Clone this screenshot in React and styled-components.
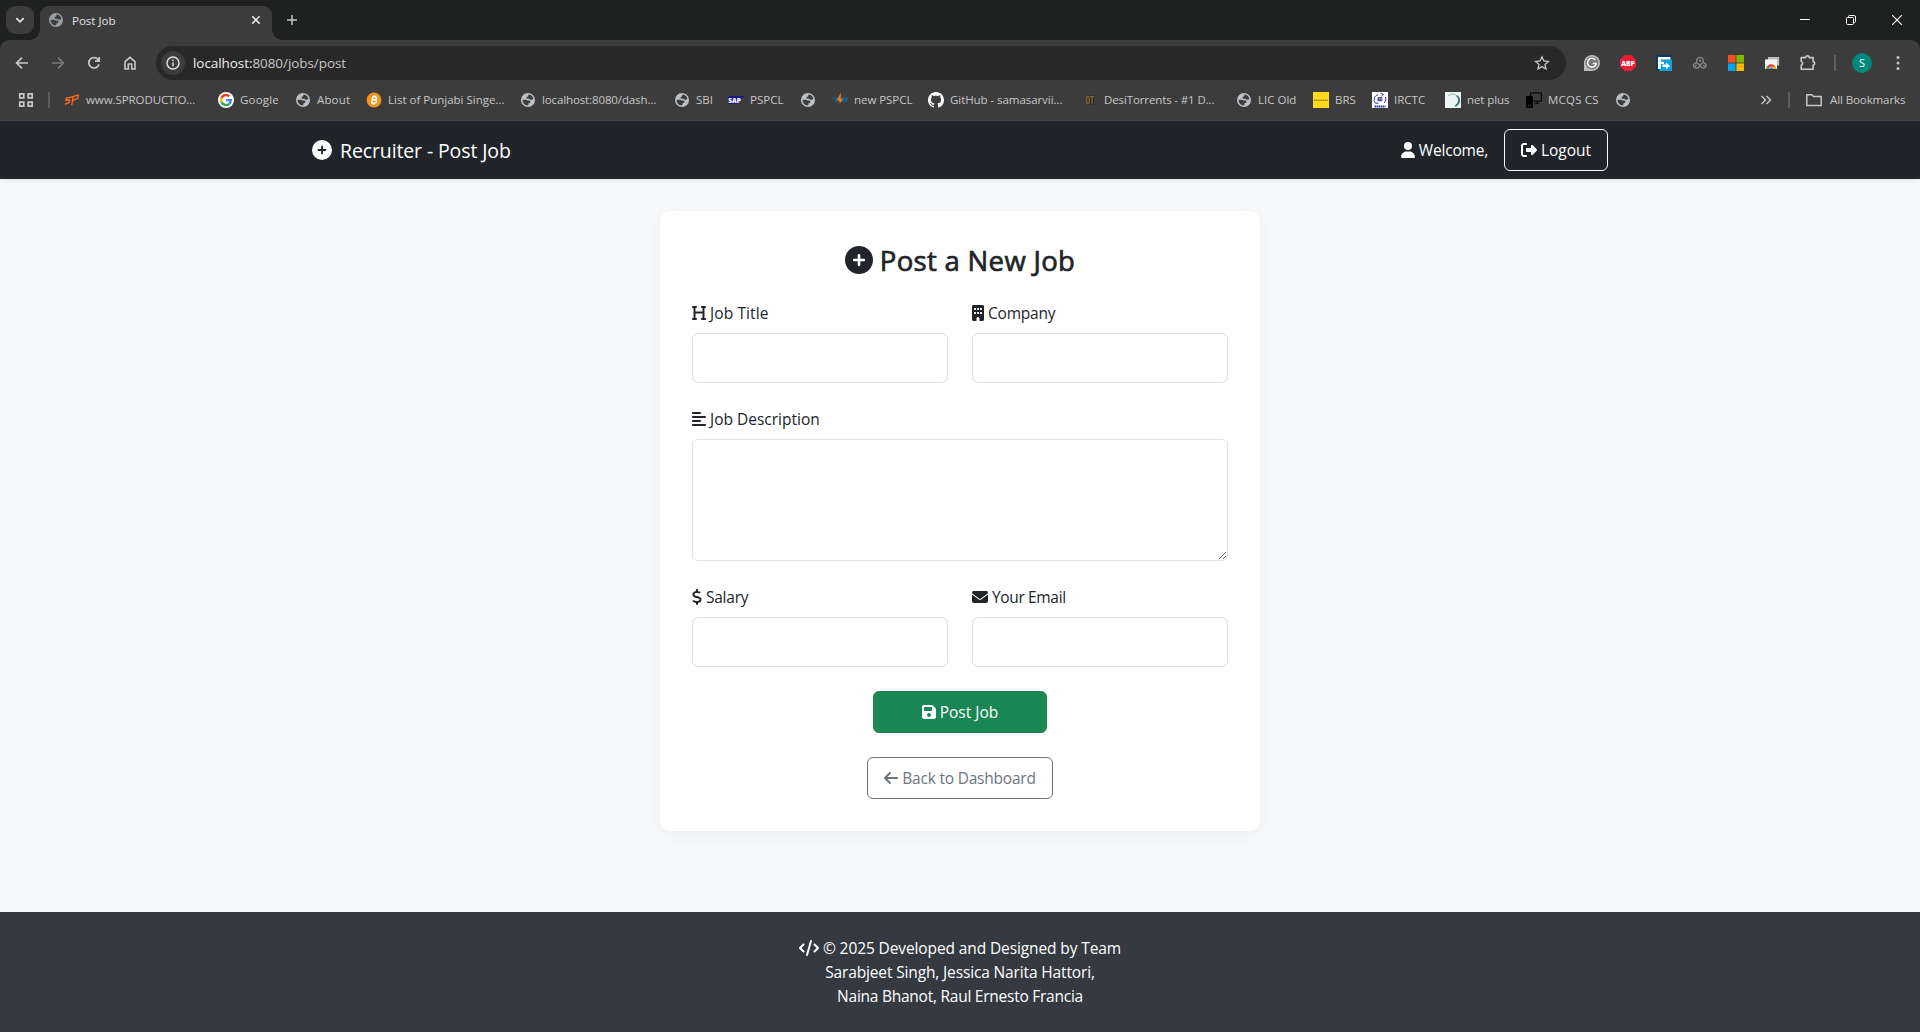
import React from 'react';
import styled, { createGlobalStyle, css } from 'styled-components';
import {
  FaCirclePlus, FaUser, FaRightFromBracket, FaHeading, FaBuilding, FaAlignLeft,
  FaDollarSign, FaEnvelope, FaFloppyDisk, FaArrowLeft, FaCode,
} from 'react-icons/fa6';

const GlobalStyle = createGlobalStyle`
  *, *::before, *::after { box-sizing: border-box; }
  body {
    margin: 0;
    font-family: "Segoe UI", "Open Sans", "Noto Sans", sans-serif;
    font-size: 16px;
    line-height: 24px;
    color: #212529;
    background: #f8f9fb;
    overflow: hidden;
  }
`;

const Window = styled.div`
  display: flex;
  flex-direction: column;
  width: 1920px;
  height: 1032px;
`;

const Label = styled.span`
  margin-top: ${(p) => p.$drop || 0}px;
  font-size: ${(p) => p.$size || 15.5}px;
  letter-spacing: ${(p) => p.$track || 0}px;
  font-weight: 400;
  -webkit-text-stroke: ${(p) => p.$stroke || 0}px currentColor;
  white-space: nowrap;
`;

/* ---------- browser chrome ---------- */

const TabStrip = styled.div`
  display: flex;
  align-items: flex-end;
  height: 40px;
  padding-left: 6px;
  background: #1f2120;
  color: #e3e3e3;
`;

const TabSearch = styled.div`
  display: grid;
  place-items: center;
  width: 28px;
  height: 28px;
  margin: 0 6px 6px 0;
  border-radius: 9px;
  background: #3c3c3c;
`;

const Tab = styled.div`
  position: relative;
  display: flex;
  align-items: center;
  width: 232px;
  height: 34px;
  padding: 0 8px 6px;
  border-radius: 9px 9px 0 0;
  background: #3c3c3c;
  color: #e3e3e3;
  &::before, &::after {
    content: '';
    position: absolute;
    bottom: 0;
    width: 10px;
    height: 10px;
  }
  &::before { left: -10px; background: radial-gradient(circle at 0 0, transparent 9.5px, #3c3c3c 10px); }
  &::after { right: -10px; background: radial-gradient(circle at 100% 0, transparent 9.5px, #3c3c3c 10px); }
`;

const TabTitle = styled.div`
  flex: 1;
  margin-left: 8px;
  line-height: 20px;
`;

const IconSlot = styled.div`
  display: grid;
  place-items: center;
  place-content: center;
  flex: none;
  width: ${(p) => p.$w || 36}px;
  height: ${(p) => p.$h || 28}px;
  color: ${(p) => p.$color || '#c7c7c7'};
`;

const Spacer = styled.div`
  flex: 1;
`;

const ToolbarBack = styled.div`
  background: #1f2120;
`;

const Toolbar = styled.div`
  height: 81px;
  border-radius: 9px 9px 0 0;
  background: #3c3c3c;
  border-bottom: 1px solid #474b49;
`;

const AddressRow = styled.div`
  display: flex;
  align-items: center;
  height: 46px;
  padding: 0 4px;
`;

const Omnibox = styled.div`
  display: flex;
  align-items: center;
  width: 1410px;
  height: 34px;
  margin: 0 8px;
  padding: 0 6px 0 5px;
  border-radius: 17px;
  background: #282828;
  color: #c7c7c7;
`;

const SiteInfo = styled.div`
  display: grid;
  place-items: center;
  width: 24px;
  height: 24px;
  margin-right: 8px;
  border-radius: 50%;
  background: #3c3c3c;
`;

const Host = styled.span`
  color: #eeeeee;
`;

const Divider = styled.div`
  width: 2px;
  height: 16px;
  background: #5e5e5e;
`;

const Avatar = styled.div`
  display: grid;
  place-items: center;
  width: 20px;
  height: 20px;
  border-radius: 50%;
  background: #00897b;
  color: #fff;
  font-size: 11px;
  line-height: 20px;
`;

const BookmarkRow = styled.div`
  display: flex;
  align-items: center;
  height: 28px;
  padding-left: 8px;
  color: #c7c7c7;
  line-height: 20px;
`;

const Bookmarks = styled.div`
  display: flex;
  flex: 1;
  padding-left: 10px;
`;

const Bookmark = styled.div`
  display: flex;
  align-items: center;
  gap: ${(p) => p.$gap || 6}px;
  width: ${(p) => p.$w}px;
  flex: none;
  svg { flex: none; }
`;

const IconBox = ({ size = 16, children, box = 16 }) => (
  <svg width={size} height={size} viewBox={`0 0 ${box} ${box}`} fill="none">{children}</svg>
);

const Globe = ({ color = '#bdc1c6' }) => (
  <IconBox>
    <circle cx="8" cy="8" r="7" fill={color} />
    <path d="M8.3 2.6c2.3 0 4.3 1.6 5 3.8-.3.9-1.2 1.5-2.4 1.4-.7 0-1-.5-1.1-1.1H7.6c-.7 0-1.1-.4-1.1-1s.5-.9 1-1c.7-.1.8-.6.8-1.1zM2.6 7.7h3.2c.8 0 1.2.3 1.5.9h1.9c.8 0 1.2.5 1.2 1.2 0 .8-.5 1.2-1.2 1.3-.6.1-.8.5-.8 1.1 0 .5-.3.9-.8 1.2-2.8-.2-5-2.5-5-5.7z" fill="#3c3c3c" />
  </IconBox>
);

const SpLogo = () => (
  <IconBox>
    <path d="M6.5 5.2 2.400 6.300 1.600 8.200 5.800 8 5.200 10.300 1.400 12M7.800 12.800 9.200 5M7.400 5.200 14.200 3 13.900 6.200 8.600 8.600" stroke="#f26a1b" strokeWidth="1.400" strokeLinejoin="round" strokeLinecap="round" />
  </IconBox>
);

const GoogleLogo = () => (
  <svg width="16" height="16" viewBox="-7 -7 62 62">
    <circle cx="24" cy="24" r="31" fill="#fff" />
    <path fill="#EA4335" d="M24 9.5c3.54 0 6.71 1.22 9.21 3.6l6.85-6.85C35.9 2.38 30.47 0 24 0 14.62 0 6.51 5.38 2.56 13.22l7.98 6.19C12.43 13.72 17.74 9.5 24 9.5z" />
    <path fill="#4285F4" d="M46.98 24.55c0-1.57-.15-3.09-.38-4.55H24v9.02h12.94c-.58 2.96-2.26 5.48-4.78 7.18l7.73 6c4.51-4.18 7.09-10.36 7.09-17.65z" />
    <path fill="#FBBC05" d="M10.53 28.59c-.48-1.45-.76-2.99-.76-4.59s.27-3.14.76-4.59l-7.98-6.19C.92 16.46 0 20.12 0 24c0 3.88.92 7.54 2.56 10.78l7.97-6.19z" />
    <path fill="#34A853" d="M24 48c6.48 0 11.93-2.13 15.89-5.81l-7.73-6c-2.15 1.45-4.92 2.3-8.16 2.3-6.26 0-11.57-4.22-13.47-9.91l-7.98 6.19C6.51 42.62 14.62 48 24 48z" />
  </svg>
);

const BitcoinLogo = () => (
  <IconBox>
    <circle cx="8" cy="8" r="7.4" fill="#f7931a" />
    <path d="M6.8 4.9 5.800 11.100M6 4.900h3c2.600.3 2.100 2.900-.4 2.900H6.200h2.600c2.700.3 2.200 3.300-.5 3.300H5M7.900 3.400l-.2 1.400M7.100 11.400l-.2 1.300M9.300 3.600l-.2 1.200M8.500 11.400l-.2 1.300" stroke="#fff" strokeWidth="1.400" />
  </IconBox>
);

const SapLogo = () => (
  <IconBox>
    <path d="M0 4h16l-6.5 8H0z" fill="#1a1a8c" />
    <text x="0.2" y="10.8" fontSize="7.5" fontWeight="800" fontFamily="Open Sans, sans-serif" fill="#fff" textLength="12.6" lengthAdjust="spacingAndGlyphs">SAP</text>
  </IconBox>
);

const BoltLogo = () => (
  <IconBox>
    <path d="M0 5.2h6l-1.200 5H3L2.500 7 0 6.200zM8.500 5.200H15.500c1 1.600.6 4-1 4.600l-6.500.6 2-2.600z" fill="#14607f" />
    <path d="M9 .5 4.600 8.400h2.800L6.400 13.500l4.800-6.700H8.600z" fill="#f07a26" />
    <path d="M6.800 10.500h1.200L6.400 16z" fill="#20303a" />
  </IconBox>
);

const GithubLogo = () => (
  <IconBox>
    <path fill="#fff" d="M8 0C3.58 0 0 3.58 0 8c0 3.54 2.29 6.53 5.47 7.59.4.07.55-.17.55-.38 0-.19-.01-.82-.01-1.49-2.01.37-2.53-.49-2.69-.94-.09-.23-.48-.94-.82-1.13-.28-.15-.68-.52-.01-.53.63-.01 1.08.58 1.23.82.72 1.21 1.87.87 2.33.66.07-.52.28-.87.51-1.07-1.78-.2-3.64-.89-3.64-3.95 0-.87.31-1.59.82-2.15-.08-.2-.36-1.02.08-2.12 0 0 .67-.21 2.2.82.64-.18 1.32-.27 2-.27s1.36.09 2 .27c1.53-1.04 2.2-.82 2.2-.82.44 1.1.16 1.92.08 2.12.51.56.82 1.27.82 2.15 0 3.07-1.87 3.75-3.65 3.95.29.25.54.73.54 1.48 0 1.07-.01 1.93-.01 2.2 0 .21.15.46.55.38A8.01 8.01 0 0 0 16 8c0-4.42-3.58-8-8-8z" />
  </IconBox>
);

const DtLogo = () => (
  <IconBox>
    <path d="M4 3.500h8v9H4z" fill="#2c2720" />
    <path d="M4.800 4.500v7M4.800 4.600h1.400q1 0 1 1v4.600q0 1-1 1H4.800M8.100 4.700h3.800M10 4.700v7" stroke="#8a6a3c" strokeWidth="1.200" />
  </IconBox>
);

const BrsLogo = () => (
  <IconBox>
    <path d="M0 0h16v16H0z" fill="#ffd91a" />
    <path d="M1 8.200h14" stroke="#6f6320" strokeWidth="1" strokeDasharray="1.4 .4" />
  </IconBox>
);

const IrctcLogo = () => (
  <IconBox>
    <path d="M0 0h16v16H0z" fill="#fff" />
    <path d="M2.400 8.500A5.500 5.500 0 0 1 6 2.600M8.600 1.200l3 1.200-2.200 1.600M13.400 5a5.500 5.500 0 0 1-1 6M1.500 8.500l2 2.700h3" stroke="#2b35a5" strokeWidth="1" />
    <path d="M5.600 5.200h4.600v4H5.600z" fill="#2b2f9b" />
    <path d="M6.600 6.400h1.400M6.600 8h1.400M9.200 6v2.400" stroke="#fff" strokeWidth=".6" />
    <path d="M2.500 14.600h11" stroke="#2b35a5" strokeWidth="2" strokeDasharray="1.600 .5" />
  </IconBox>
);

const NetLogo = () => (
  <IconBox>
    <path d="M0 0h16v16H0z" fill="#eef4f6" />
    <path d="M3 4.200A6 6 0 0 1 12 4" stroke="#9db4b0" strokeWidth="1" />
    <path d="M12 3.600c3.600 3.600 2.400 8.600-2 10.400" stroke="#2f7f6d" strokeWidth="1.600" />
    <path d="M14.300 6.500c.4 3-1 5.600-3.400 7" stroke="#3f4f8c" strokeWidth=".8" />
  </IconBox>
);

const DevicesLogo = () => (
  <IconBox>
    <path d="M4.600 4.500V.9h10.800v8.300H7" stroke="#0b0b0b" strokeWidth="1.300" />
    <path d="M10.400 9.200h1.600v2.200h-1.600zM8.600 11h5v.9h-5z" fill="#0b0b0b" />
    <rect x="0" y="4" width="7" height="12" rx="1" fill="#000" />
    <path d="M2 13.600h1M4.200 13.600h1" stroke="#555" strokeWidth=".8" />
  </IconBox>
);

const BOOKMARKS = [
  { icon: <SpLogo />, text: 'www.SPRODUCTIO...', w: 154, track: -0.08 },
  { icon: <GoogleLogo />, text: 'Google', w: 77, track: 0.2 },
  { icon: <Globe />, text: 'About', w: 71, track: 0.15 },
  { icon: <BitcoinLogo />, text: 'List of Punjabi Singe...', w: 154 },
  { icon: <Globe />, text: 'localhost:8080/dash...', w: 154, track: -0.12 },
  { icon: <Globe />, text: 'SBI', w: 54 },
  { icon: <SapLogo />, text: 'PSPCL', w: 72 },
  { icon: <Globe />, text: '', w: 32 },
  { icon: <BoltLogo />, text: 'new PSPCL', w: 96, track: -0.05 },
  { icon: <GithubLogo />, text: 'GitHub - samasarvii...', w: 154, track: -0.06 },
  { icon: <DtLogo />, text: 'DesiTorrents - #1 D...', w: 154, track: -0.12 },
  { icon: <Globe />, text: 'LIC Old', w: 77 },
  { icon: <BrsLogo />, text: 'BRS', w: 59 },
  { icon: <IrctcLogo />, text: 'IRCTC', w: 73 },
  { icon: <NetLogo />, text: 'net plus', w: 81, track: -0.08 },
  { icon: <DevicesLogo />, text: 'MCQS CS', w: 89, track: 0.2 },
  { icon: <Globe />, text: '', w: 32 },
];

const Stroke = ({ d, size = 16, width = 1.7 }) => (
  <IconBox size={size}><path d={d} stroke="currentColor" strokeWidth={width} /></IconBox>
);

const Extensions = () => (
  <>
    <IconSlot>
      <IconBox>
        <path d="M8 0a8 8 0 0 1 0 16H0V8a8 8 0 0 1 8-8z" fill="#bdbdbd" />
        <circle cx="8" cy="8" r="6.500" fill="#777" />
        <path d="M11.400 5A4.400 4.400 0 1 0 12.300 8.600H8.800" stroke="#fff" strokeWidth="1.500" />
      </IconBox>
    </IconSlot>
    <IconSlot>
      <IconBox>
        <path d="M4.700 0h6.600L16 4.700v6.600L11.300 16H4.700L0 11.300V4.700z" fill="#ee1c3b" />
        <text x="1.200" y="10.700" fontSize="7.500" fontWeight="800" fontFamily="Open Sans, sans-serif" fill="#fff" textLength="13.600" lengthAdjust="spacingAndGlyphs">ABP</text>
      </IconBox>
    </IconSlot>
    <IconSlot>
      <IconBox>
        <path d="M0 0h16v16H0z" fill="#0b3a66" />
        <path d="M3.500 4.500H16V16H3.500z" fill="#13a0dc" />
        <path d="M2 2h12.500v2.600H4.800v2.200H8V9H4.800v5H2z" fill="#fff" />
        <path d="M6.500 9.600H10V7.400l4 3.400-4 3.400V12H6.500z" fill="#fff" />
      </IconBox>
    </IconSlot>
    <IconSlot>
      <IconBox>
        <path d="M4.800 7A3.400 3.400 0 1 1 11.200 7M4.400 13a2.600 2.600 0 1 1 1.800-4.200l3.400 3.400a2.600 2.600 0 1 0 .4-4L6.800 12.200a2.600 2.600 0 0 1-2.400.8" stroke="#8c8c8c" strokeWidth="1.300" />
        <circle cx="8" cy="5.700" r="1.100" fill="#8c8c8c" />
        <circle cx="3.800" cy="10.600" r=".9" fill="#8c8c8c" />
        <circle cx="12" cy="10.600" r=".9" fill="#8c8c8c" />
      </IconBox>
    </IconSlot>
    <IconSlot>
      <IconBox>
        <path d="M0 0h7.600v7.600H0z" fill="#f25022" />
        <path d="M8.400 0H16v7.600H8.400z" fill="#7fba00" />
        <path d="M0 8.400h7.600V16H0z" fill="#00a4ef" />
        <path d="M8.400 8.400H16V16H8.400z" fill="#ffb900" />
      </IconBox>
    </IconSlot>
    <IconSlot>
      <IconBox>
        <path d="M4 2h11.200v8.600H4z" fill="#bdbdbd" />
        <path d="M1 4.400h12v9.600H1z" fill="#f4f4f4" />
        <path d="M2.400 14a4.800 4.800 0 0 1 9.600 0H9.400a2.200 2.200 0 0 0-4.400 0z" fill="#e94335" />
        <path d="M2.400 14c0-1.200.4-2.200 1-3L5.400 13v1z" fill="#34a853" />
        <path d="M12 14c0-1-.3-1.800-.8-2.600H8.600L9.400 14z" fill="#fbbc04" />
        <path d="M5.400 14a1.800 1.800 0 0 1 3.600 0z" fill="#4285f4" />
      </IconBox>
    </IconSlot>
    <IconSlot>
      <IconBox>
        <path d="M1.200 2.600h4.500a1.700 1.700 0 0 1 3.400 0h4v4.200a1.600 1.600 0 0 1 0 3.200v4.200H1.200v-4a1.900 1.900 0 0 0 0-3.700z" stroke="#c7c7c7" strokeWidth="1.600" strokeLinejoin="round" />
      </IconBox>
    </IconSlot>
  </>
);

const Browser = () => (
  <>
    <TabStrip>
      <TabSearch>
        <Stroke d="M4.300 6.200 8 9.900l3.700-3.700" />
      </TabSearch>
      <Tab>
        <Globe color="#9aa0a6" />
        <TabTitle><Label $size={11.5}>Post Job</Label></TabTitle>
        <Stroke d="M4.200 4.200l7.400 7.400M11.600 4.200l-7.400 7.400" width={1.6} />
      </Tab>
      <IconSlot $w={40} $h={40}>
        <Stroke d="M8 3v10M3 8h10" width={1.5} />
      </IconSlot>
      <Spacer />
      <IconSlot $w={46} $h={40} $color="#fff">
        <Stroke d="M3 7.500h10" width={1} />
      </IconSlot>
      <IconSlot $w={46} $h={40} $color="#fff">
        <IconBox>
          <rect x="3.500" y="5.500" width="7" height="7" rx="1" stroke="currentColor" />
          <path d="M5.500 5V4.500q0-1 1-1h4.500q1.500 0 1.500 1.500v4.500q0 1-1 1H11" stroke="currentColor" />
        </IconBox>
      </IconSlot>
      <IconSlot $w={46} $h={40} $color="#fff">
        <Stroke d="M3.200 3.200l9.600 9.600M12.800 3.200l-9.600 9.600" width={1.1} />
      </IconSlot>
    </TabStrip>
    <ToolbarBack>
      <Toolbar>
        <AddressRow>
          <IconSlot><Stroke d="M14 8H3M8 2.600 2.600 8 8 13.400" /></IconSlot>
          <IconSlot $color="#7a7a7a"><Stroke d="M2 8h11M8 2.600 13.400 8 8 13.400" /></IconSlot>
          <IconSlot><Stroke d="M13 9.200A5.200 5.200 0 1 1 12.400 5M13.200 2v4.200H9" /></IconSlot>
          <IconSlot><Stroke d="M3 6.600 8 2.400l5 4.200v7.400H9.700V9H6.300v5H3z" width={1.6} /></IconSlot>
          <Omnibox>
            <SiteInfo>
              <IconBox>
                <circle cx="8" cy="8" r="6" stroke="#e0e0e0" strokeWidth="1.5" />
                <path d="M8 7.300v4M8 4.500v1.500" stroke="#e0e0e0" strokeWidth="1.500" />
              </IconBox>
            </SiteInfo>
            <Label $size={13.5} $track={-0.07}><Host>localhost:</Host>8080/jobs/post</Label>
            <Spacer />
            <IconSlot>
              <IconBox>
                <path d="M8 1.800l1.900 4.200 4.500.5-3.400 3 1 4.500-4-2.400-4 2.400 1-4.500-3.400-3 4.500-.5z" stroke="#c7c7c7" strokeWidth="1.300" />
              </IconBox>
            </IconSlot>
          </Omnibox>
          <Extensions />
          <IconSlot $w={18}><Divider /></IconSlot>
          <IconSlot><Avatar>S</Avatar></IconSlot>
          <IconSlot>
            <IconBox>
              <circle cx="8" cy="2.600" r="1.500" fill="currentColor" />
              <circle cx="8" cy="8" r="1.500" fill="currentColor" />
              <circle cx="8" cy="13.400" r="1.500" fill="currentColor" />
            </IconBox>
          </IconSlot>
        </AddressRow>
        <BookmarkRow>
          <IconSlot>
            <IconBox>
              <path d="M1.800 1.800h4v4h-4zM10.200 1.800h4v4h-4zM1.800 10.200h4v4h-4zM10.200 10.200h4v4h-4z" stroke="currentColor" strokeWidth="1.700" />
            </IconBox>
          </IconSlot>
          <IconSlot $w={10}><Divider /></IconSlot>
          <Bookmarks>
            {BOOKMARKS.map((b, i) => (
              <Bookmark key={i} $w={b.w}>
                {b.icon}
                {b.text && <Label $size={11.5} $track={b.track}>{b.text}</Label>}
              </Bookmark>
            ))}
          </Bookmarks>
          <IconSlot $w={12}><Stroke d="M3.500 4l4 4-4 4M8.500 4l4 4-4 4" width={1.5} /></IconSlot>
          <IconSlot $w={34}><Divider /></IconSlot>
          <Bookmark $w={114} $gap={8}>
            <Stroke d="M.800 2.800h5l1.700 1.700h7.700v9H.800z" width={1.5} />
            <Label $size={11.5} $track={-0.1}>All Bookmarks</Label>
          </Bookmark>
        </BookmarkRow>
      </Toolbar>
    </ToolbarBack>
  </>
);

/* ---------- page ---------- */

const Navbar = styled.nav`
  position: relative;
  display: flex;
  justify-content: center;
  height: 58px;
  background: #212529;
  color: #fff;
  box-shadow: 0 2px 4px rgba(0, 0, 0, 0.075);
`;

const NavInner = styled.div`
  display: flex;
  align-items: center;
  width: 1296px;
`;

const Brand = styled.div`
  display: flex;
  align-items: center;
  gap: 8px;
  flex: 1;
`;

const iconLine = css`
  display: flex;
  align-items: center;
  gap: 4px;
  svg {
    flex: none;
    width: ${(p) => p.$icon || 14}px;
    height: 16px;
  }
`;

const IconText = styled.div`
  ${iconLine}
`;

const Account = styled.div`
  display: flex;
  align-items: center;
  gap: 16px;
`;

const Button = styled.button`
  ${iconLine}
  justify-content: center;
  width: ${(p) => p.$w}px;
  height: 42px;
  padding: 0;
  border: 1px solid ${(p) => p.$border};
  border-radius: 6px;
  background: ${(p) => p.$bg || 'transparent'};
  color: ${(p) => p.$color};
  font: inherit;
`;

const Main = styled.main`
  flex: 1;
  display: flex;
  justify-content: center;
  align-items: flex-start;
  padding-top: 32px;
`;

const Card = styled.form`
  display: flex;
  flex-direction: column;
  align-items: center;
  width: 600px;
  height: 620px;
  padding: 32px;
  border-radius: 10px;
  background: #fff;
  box-shadow: 0 4px 20px rgba(0, 0, 0, 0.05);
`;

const Heading = styled.h2`
  display: flex;
  align-items: center;
  gap: 7px;
  height: 34px;
  margin: 0 0 24px;
  font-size: 28px;
  line-height: 34px;
`;

const Fields = styled.div`
  display: grid;
  grid-template-columns: 1fr 1fr;
  gap: 24px;
  width: 100%;
  margin-bottom: 24px;
`;

const Field = styled.label`
  display: flex;
  flex-direction: column;
  gap: 8px;
  ${(p) => p.$wide && css`grid-column: 1 / -1;`}
`;

const control = css`
  display: block;
  width: 100%;
  margin: 0;
  border: 1px solid #dee2e6;
  border-radius: 6px;
  background: #fff;
  outline: none;
`;

const Input = styled.input`
  ${control}
  height: 50px;
`;

const TextArea = styled.textarea`
  ${control}
  height: 122px;
  resize: vertical;
`;

const Stack = styled.div`
  display: flex;
  flex-direction: column;
  align-items: center;
  gap: 24px;
`;

const Footer = styled.footer`
  display: flex;
  flex-direction: column;
  align-items: center;
  height: 120px;
  padding: 24px 0;
  background: #343a40;
  color: #fff;
`;

export default function App() {
  return (
    <Window>
      <GlobalStyle />
      <Browser />
      <Navbar>
        <NavInner>
          <Brand><FaCirclePlus size={20} /><Label $size={19.5} $track={-0.12} $drop={2}>Recruiter - Post Job</Label></Brand>
          <Account>
            <IconText><FaUser /><Label $track={-0.2}>Welcome,</Label></IconText>
            <Button type="button" $icon={16} $w={104} $border="#f8f9fa" $color="#fff">
              <FaRightFromBracket /><Label>Logout</Label>
            </Button>
          </Account>
        </NavInner>
      </Navbar>
      <Main>
        <Card>
          <Heading><FaCirclePlus size={28} /><Label $size={27.5} $stroke={0.7} $track={0.32} $drop={2}>Post a New Job</Label></Heading>
          <Fields>
            <Field><IconText><FaHeading /><Label $track={0.1}>Job Title</Label></IconText><Input /></Field>
            <Field><IconText $icon={12}><FaBuilding /><Label $track={-0.2}>Company</Label></IconText><Input /></Field>
            <Field $wide><IconText><FaAlignLeft /><Label>Job Description</Label></IconText><TextArea /></Field>
            <Field><IconText $icon={10}><FaDollarSign /><Label $track={-0.25}>Salary</Label></IconText><Input /></Field>
            <Field><IconText $icon={16}><FaEnvelope /><Label $track={-0.35}>Your Email</Label></IconText><Input /></Field>
          </Fields>
          <Stack>
            <Button type="button" $w={174} $border="#198754" $bg="#198754" $color="#fff">
              <FaFloppyDisk /><Label>Post Job</Label>
            </Button>
            <Button type="button" $w={186} $border="#6c757d" $color="#6c757d">
              <FaArrowLeft /><Label $track={-0.22}>Back to Dashboard</Label>
            </Button>
          </Stack>
        </Card>
      </Main>
      <Footer>
        <IconText $icon={20}><FaCode /><Label $track={-0.11}>© 2025 Developed and Designed by Team</Label></IconText>
        <Label $track={-0.14}>Sarabjeet Singh, Jessica Narita Hattori,</Label>
        <Label $track={-0.25}>Naina Bhanot, Raul Ernesto Francia</Label>
      </Footer>
    </Window>
  );
}
